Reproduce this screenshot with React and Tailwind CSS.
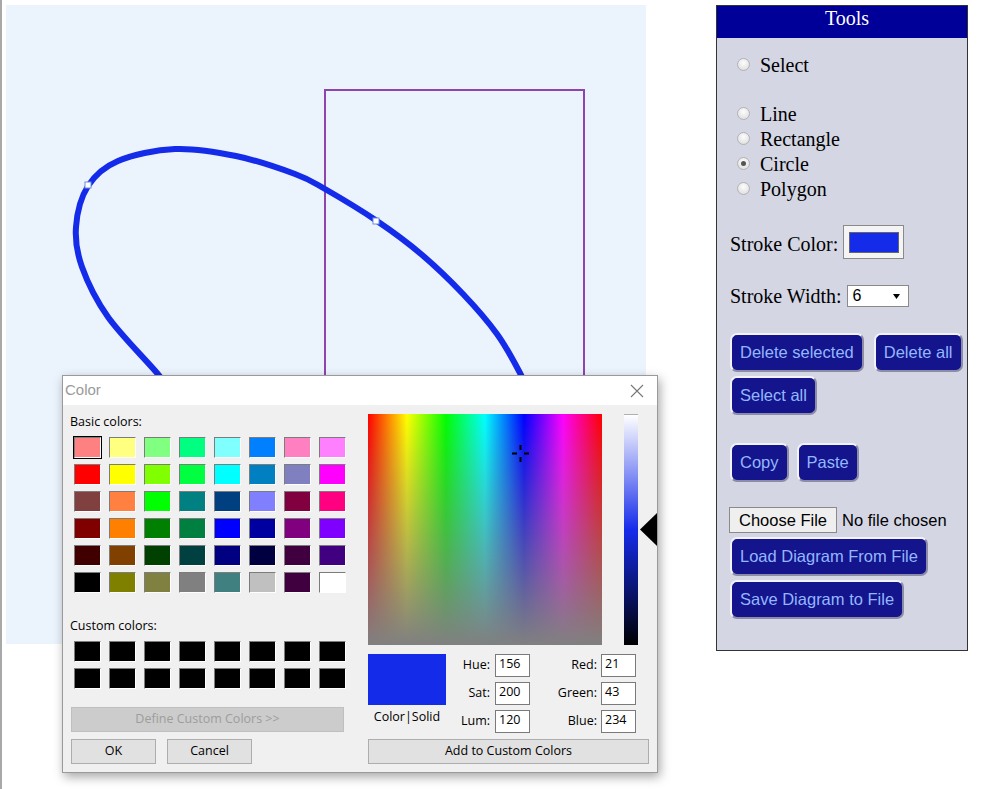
import React from 'react';

const basicColors = [
  '#ff8080', '#ffff80', '#80ff80', '#00ff80', '#80ffff', '#0080ff', '#ff80c0', '#ff80ff',
  '#ff0000', '#ffff00', '#80ff00', '#00ff40', '#00ffff', '#0080c0', '#8080c0', '#ff00ff',
  '#804040', '#ff8040', '#00ff00', '#008080', '#004080', '#8080ff', '#800040', '#ff0080',
  '#800000', '#ff8000', '#008000', '#008040', '#0000ff', '#0000a0', '#800080', '#8000ff',
  '#400000', '#804000', '#004000', '#004040', '#000080', '#000040', '#400040', '#400080',
  '#000000', '#808000', '#808040', '#808080', '#408080', '#c0c0c0', '#400040', '#ffffff',
];

// points along the visible part of the ellipse (page coords), first/last are phantoms
const ellipsePoints = [
  [200, 430], [178, 400], [157, 373], [108, 317], [82, 267], [76, 227], [88, 186],
  [118, 161], [175, 149], [236, 156], [295, 174], [325, 189], [377, 221],
  [421, 254], [463, 294], [497, 334], [520, 373], [532, 400], [540, 430],
];

function splinePath(pts) {
  let d = `M${pts[1][0]},${pts[1][1]}`;
  for (let i = 1; i < pts.length - 2; i++) {
    const p0 = pts[i - 1], p1 = pts[i], p2 = pts[i + 1], p3 = pts[i + 2];
    const c1 = [p1[0] + (p2[0] - p0[0]) / 6, p1[1] + (p2[1] - p0[1]) / 6];
    const c2 = [p2[0] - (p3[0] - p1[0]) / 6, p2[1] - (p3[1] - p1[1]) / 6];
    d += ` C${c1[0]},${c1[1]} ${c2[0]},${c2[1]} ${p2[0]},${p2[1]}`;
  }
  return d;
}

const panelBtn =
  "h-[39px] px-[8px] rounded-[7px] border-2 border-t-[#f2f2f8] border-l-[#f2f2f8] border-r-[#8c8ca8] border-b-[#8c8ca8] bg-[#14148c] text-[#93b7ff] text-[16.5px] font-['Liberation_Sans',Arial,sans-serif] leading-none";

const winBtn = 'h-[25px] bg-[#e1e1e1] border border-[#adadad] text-black';

function Radio({ checked }) {
  return (
    <span className="w-[13px] h-[13px] ml-[7px] mr-[10px] rounded-full border border-[#b3b3b3] bg-[radial-gradient(circle_at_50%_35%,#fdfdfd,#d9d9d9)] flex items-center justify-center">
      {checked && <span className="w-[5px] h-[5px] rounded-full bg-[#555]" />}
    </span>
  );
}

function Swatch({ color, selected }) {
  return (
    <div
      className={`w-[27px] h-[21px] border border-t-[#7c7c7c] border-l-[#7c7c7c] border-r-white border-b-white ${
        selected ? 'outline outline-1 outline-black' : ''
      }`}
      style={{ backgroundColor: color }}
    />
  );
}

function NumField({ label, value, labelWidth }) {
  return (
    <>
      <span className="text-right" style={{ width: labelWidth }}>{label}</span>
      <div className="w-[35px] h-[23px] bg-white border border-[#7a7a7a] pl-[3px] leading-[18px]">{value}</div>
    </>
  );
}

function ColorDialog() {
  return (
    <div className="absolute left-[60px] top-[375px] w-[596px] h-[398px] border border-[#9a9a9a] bg-[#f0f0f0] shadow-[2px_4px_10px_rgba(0,0,0,0.35)] overflow-hidden font-['Open_Sans','Liberation_Sans',sans-serif] text-[12.5px] text-black">
      {/* Title bar */}
      <div className="h-[29px] bg-white flex items-center justify-between pl-[2px] pr-[13px]">
        <span className="text-[15px] text-[#9a9a9a] font-['Liberation_Sans',sans-serif]">Color</span>
        <svg width="14" height="14" viewBox="0 0 14 14">
          <path d="M1 1 L13 13 M13 1 L1 13" stroke="#777" strokeWidth="1.1" />
        </svg>
      </div>

      <div className="flex">
        {/* Left column */}
        <div className="w-[305px] shrink-0 pl-[7px] pt-[9px]">
          <div className="leading-[16px]">Basic colors:</div>
          <div className="mt-[7px] ml-[4px] grid grid-cols-[repeat(8,27px)] gap-x-[8px] gap-y-[6px]">
            {basicColors.map((c, i) => (
              <Swatch key={i} color={c} selected={i === 0} />
            ))}
          </div>
          <div className="mt-[25px] leading-[16px]">Custom colors:</div>
          <div className="mt-[7px] ml-[4px] grid grid-cols-[repeat(8,27px)] gap-x-[8px] gap-y-[6px]">
            {Array.from({ length: 16 }).map((_, i) => (
              <Swatch key={i} color="#000000" />
            ))}
          </div>
          <div className="mt-[18px] ml-[1px] w-[273px] h-[25px] bg-[#cccccc] border border-[#bfbfbf] text-[#9d9d9d] flex items-center justify-center">
            Define Custom Colors &gt;&gt;
          </div>
          <div className="mt-[7px] ml-[1px] flex gap-[11px]">
            <button className={`${winBtn} w-[85px]`}>OK</button>
            <button className={`${winBtn} w-[85px]`}>Cancel</button>
          </div>
        </div>

        {/* Right column */}
        <div className="pt-[9px]">
          <div className="flex items-start">
            <div className="relative shrink-0 w-[234px] h-[231px] bg-[linear-gradient(to_bottom,rgba(128,128,128,0),#808080),linear-gradient(to_right,#f00,#ff0,#0f0,#0ff,#00f,#f0f,#f00)]">
              <svg className="absolute left-[142px] top-[29px]" width="21" height="21" viewBox="0 0 21 21">
                <path d="M10.5 2 V7 M10.5 14 V19 M2 10.5 H7 M14 10.5 H19" stroke="#000" strokeWidth="2" />
              </svg>
            </div>
            <div className="ml-[22px] shrink-0 w-[14px] h-[231px] border-t border-[#b0b0b0] bg-[linear-gradient(to_bottom,#ffffff,#152bea_50%,#000000)]" />
            <svg className="ml-[2px] mt-[97px] shrink-0" width="19" height="37" viewBox="0 0 19 37">
              <polygon points="0,18.5 19,0 19,37" fill="#000" />
            </svg>
          </div>

          <div className="mt-[9px] flex">
            <div className="w-[78px] flex flex-col items-center">
              <div className="w-[78px] h-[51px] bg-[#152bea]" />
              <div className="mt-[3px]">Color|Solid</div>
            </div>
            <div className="ml-[4px] grid grid-cols-[40px_35px] gap-x-[5px] gap-y-[5px] items-center">
              <NumField label="Hue:" value="156" labelWidth={40} />
              <NumField label="Sat:" value="200" labelWidth={40} />
              <NumField label="Lum:" value="120" labelWidth={40} />
            </div>
            <div className="ml-[5px] grid grid-cols-[62px_35px] gap-x-[4px] gap-y-[5px] items-center">
              <NumField label="Red:" value="21" labelWidth={62} />
              <NumField label="Green:" value="43" labelWidth={62} />
              <NumField label="Blue:" value="234" labelWidth={62} />
            </div>
          </div>

          <button className={`${winBtn} mt-[6px] w-[281px] block`}>Add to Custom Colors</button>
        </div>
      </div>
    </div>
  );
}

function ToolsPanel() {
  const shapes = [
    { label: 'Line' },
    { label: 'Rectangle' },
    { label: 'Circle', checked: true },
    { label: 'Polygon' },
  ];

  return (
    <div className="w-[252px] h-[646px] border border-[#333] bg-[#d4d6e4] text-[20px] text-black">
      <div className="h-[32px] bg-[#000099] text-white text-center pl-[10px] leading-[24px]">Tools</div>

      <div className="pl-[13px] pt-[14px]">
        <div className="h-[25px] flex items-center">
          <Radio />
          <span>Select</span>
        </div>
        <div className="h-[24px]" />
        {shapes.map((s) => (
          <div key={s.label} className="h-[25px] flex items-center">
            <Radio checked={s.checked} />
            <span>{s.label}</span>
          </div>
        ))}

        {/* Stroke color */}
        <div className="mt-[24px] h-[34px] flex items-center">
          <span className="pt-[3px]">Stroke Color:</span>
          <div className="ml-[5px] w-[61px] h-[34px] bg-[#f4f4f4] border border-[#8a8a8a] flex items-center justify-center">
            <div className="w-[50px] h-[21px] bg-[#152bea] border border-[#666]" />
          </div>
        </div>

        {/* Stroke width */}
        <div className="mt-[26px] h-[22px] flex items-center">
          <span>Stroke Width:</span>
          <div className="ml-[5px] w-[62px] h-[22px] bg-white border border-[#8a8a8a] flex items-center justify-between pl-[5px] pr-[8px] text-[16px] font-['Liberation_Sans',sans-serif]">
            <span>6</span>
            <svg width="7" height="5" viewBox="0 0 7 5">
              <polygon points="0,0 7,0 3.5,5" fill="#000" />
            </svg>
          </div>
        </div>

        {/* Delete / select */}
        <div className="mt-[26px] flex flex-wrap gap-x-[10px] gap-y-[4px]">
          <button className={panelBtn}>Delete selected</button>
          <button className={panelBtn}>Delete all</button>
          <button className={panelBtn}>Select all</button>
        </div>

        {/* Copy / paste */}
        <div className="mt-[28px] flex gap-[8px]">
          <button className={panelBtn}>Copy</button>
          <button className={panelBtn}>Paste</button>
        </div>

        {/* File */}
        <div className="mt-[25px] ml-[-1px] flex items-center font-['Liberation_Sans',sans-serif] text-[16.5px]">
          <button className="h-[26px] px-[9px] bg-[#efefef] border border-[#8a8a8a]">Choose File</button>
          <span className="ml-[5px]">No file chosen</span>
        </div>
        <div className="mt-[4px] flex flex-col items-start gap-[4px]">
          <button className={panelBtn}>Load Diagram From File</button>
          <button className={panelBtn}>Save Diagram to File</button>
        </div>
      </div>
    </div>
  );
}

export default function App() {
  return (
    <div className="relative min-h-[789px] bg-white border-l-2 border-[#a8a8a8] pl-[4px] pt-[5px] flex items-start gap-[70px] font-['Liberation_Serif','Times_New_Roman',serif]">
      {/* Drawing canvas */}
      <div className="relative w-[640px] h-[639px] bg-[#ebf3fc] overflow-hidden">
        <svg className="absolute inset-0" width="640" height="639" viewBox="6 5 640 639">
          <rect x="325" y="90" width="259" height="560" fill="none" stroke="#8e44ad" strokeWidth="2" />
          <path d={splinePath(ellipsePoints)} fill="none" stroke="#152bea" strokeWidth="6" strokeLinecap="round" />
          <rect x="85" y="182" width="6" height="6" fill="#fff" stroke="#6f8fd6" strokeWidth="1" />
          <rect x="373" y="218" width="6" height="6" fill="#fff" stroke="#6f8fd6" strokeWidth="1" />
        </svg>
      </div>

      <ToolsPanel />

      <ColorDialog />
    </div>
  );
}
